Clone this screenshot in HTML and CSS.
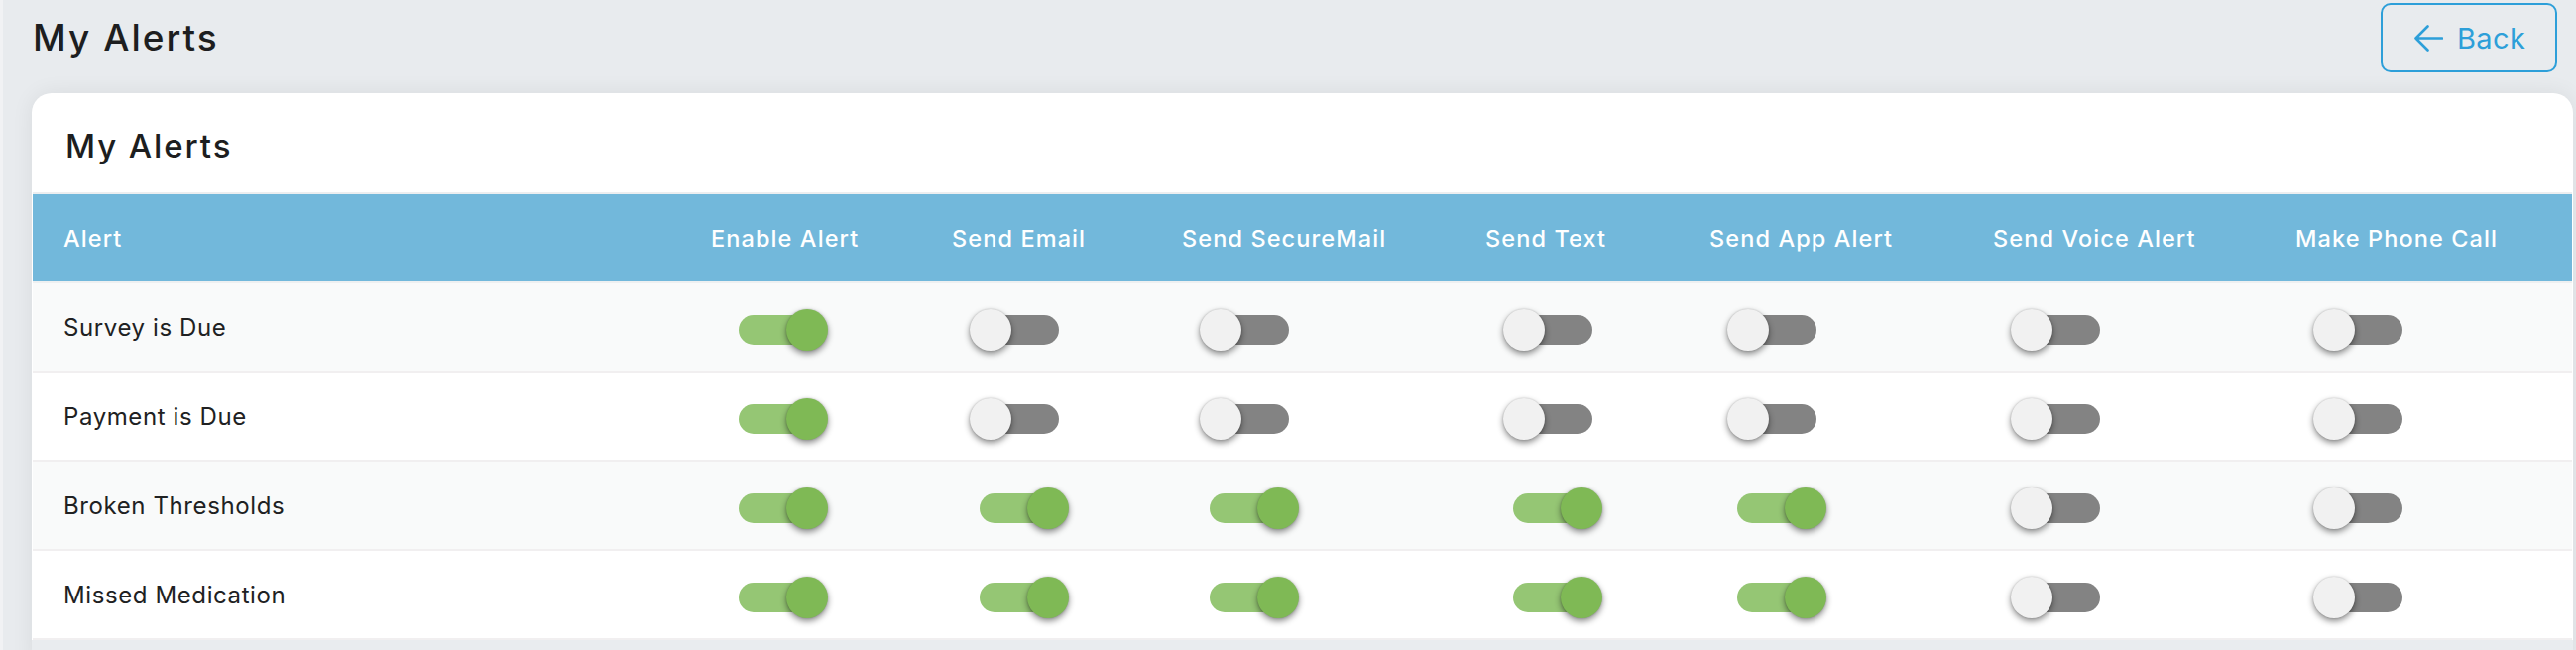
FILE: index.html
```html
<!DOCTYPE html>
<html lang="en">
<head>
<meta charset="utf-8">
<title>My Alerts</title>
<link rel="stylesheet" href="styles.css">
</head>
<body>
<div class="page">
  <header class="page-head">
    <h1 class="page-title">My Alerts</h1>
    <button class="back-btn" type="button">
      <svg class="back-icon" viewBox="0 0 30 29" width="30" height="29" aria-hidden="true">
        <path d="M29 14.5H2.5M14.5 2.5L2.5 14.5L14.5 26.5" fill="none" stroke="currentColor" stroke-width="2.6" stroke-linecap="round" stroke-linejoin="round"/>
      </svg>
      <span>Back</span>
    </button>
  </header>

  <section class="card">
    <h2 class="card-title">My Alerts</h2>
    <div class="alerts">
      <div class="row row--head">
        <div class="cell">Alert</div>
        <div class="cell">Enable Alert</div>
        <div class="cell">Send Email</div>
        <div class="cell">Send SecureMail</div>
        <div class="cell">Send Text</div>
        <div class="cell">Send App Alert</div>
        <div class="cell">Send Voice Alert</div>
        <div class="cell">Make Phone Call</div>
      </div>

      <div class="row row--odd">
        <div class="cell cell--label">Survey is Due</div>
        <div class="cell"><span class="toggle toggle--on"><span class="toggle-track"></span><span class="toggle-knob"></span></span></div>
        <div class="cell"><span class="toggle"><span class="toggle-track"></span><span class="toggle-knob"></span></span></div>
        <div class="cell"><span class="toggle"><span class="toggle-track"></span><span class="toggle-knob"></span></span></div>
        <div class="cell"><span class="toggle"><span class="toggle-track"></span><span class="toggle-knob"></span></span></div>
        <div class="cell"><span class="toggle"><span class="toggle-track"></span><span class="toggle-knob"></span></span></div>
        <div class="cell"><span class="toggle"><span class="toggle-track"></span><span class="toggle-knob"></span></span></div>
        <div class="cell"><span class="toggle"><span class="toggle-track"></span><span class="toggle-knob"></span></span></div>
      </div>

      <div class="row">
        <div class="cell cell--label">Payment is Due</div>
        <div class="cell"><span class="toggle toggle--on"><span class="toggle-track"></span><span class="toggle-knob"></span></span></div>
        <div class="cell"><span class="toggle"><span class="toggle-track"></span><span class="toggle-knob"></span></span></div>
        <div class="cell"><span class="toggle"><span class="toggle-track"></span><span class="toggle-knob"></span></span></div>
        <div class="cell"><span class="toggle"><span class="toggle-track"></span><span class="toggle-knob"></span></span></div>
        <div class="cell"><span class="toggle"><span class="toggle-track"></span><span class="toggle-knob"></span></span></div>
        <div class="cell"><span class="toggle"><span class="toggle-track"></span><span class="toggle-knob"></span></span></div>
        <div class="cell"><span class="toggle"><span class="toggle-track"></span><span class="toggle-knob"></span></span></div>
      </div>

      <div class="row row--odd">
        <div class="cell cell--label">Broken Thresholds</div>
        <div class="cell"><span class="toggle toggle--on"><span class="toggle-track"></span><span class="toggle-knob"></span></span></div>
        <div class="cell"><span class="toggle toggle--on"><span class="toggle-track"></span><span class="toggle-knob"></span></span></div>
        <div class="cell"><span class="toggle toggle--on"><span class="toggle-track"></span><span class="toggle-knob"></span></span></div>
        <div class="cell"><span class="toggle toggle--on"><span class="toggle-track"></span><span class="toggle-knob"></span></span></div>
        <div class="cell"><span class="toggle toggle--on"><span class="toggle-track"></span><span class="toggle-knob"></span></span></div>
        <div class="cell"><span class="toggle"><span class="toggle-track"></span><span class="toggle-knob"></span></span></div>
        <div class="cell"><span class="toggle"><span class="toggle-track"></span><span class="toggle-knob"></span></span></div>
      </div>

      <div class="row">
        <div class="cell cell--label">Missed Medication</div>
        <div class="cell"><span class="toggle toggle--on"><span class="toggle-track"></span><span class="toggle-knob"></span></span></div>
        <div class="cell"><span class="toggle toggle--on"><span class="toggle-track"></span><span class="toggle-knob"></span></span></div>
        <div class="cell"><span class="toggle toggle--on"><span class="toggle-track"></span><span class="toggle-knob"></span></span></div>
        <div class="cell"><span class="toggle toggle--on"><span class="toggle-track"></span><span class="toggle-knob"></span></span></div>
        <div class="cell"><span class="toggle toggle--on"><span class="toggle-track"></span><span class="toggle-knob"></span></span></div>
        <div class="cell"><span class="toggle"><span class="toggle-track"></span><span class="toggle-knob"></span></span></div>
        <div class="cell"><span class="toggle"><span class="toggle-track"></span><span class="toggle-knob"></span></span></div>
      </div>
    </div>
    <div class="card-foot"></div>
  </section>
</div>
</body>
</html>
```

FILE: styles.css
```css
* {
  box-sizing: border-box;
}

html, body {
  margin: 0;
  padding: 0;
}

body {
  background: #e8ebee;
  font-family: "Inter", "Liberation Sans", sans-serif;
  color: #202122;
}

.page {
  border-left: 3px solid #f1f2f4;
  min-height: 100vh;
  padding: 0 3px 0 29px;
}

.page-head {
  height: 76px;
  display: flex;
  align-items: center;
  justify-content: space-between;
  padding: 0 16px 0 1px;
}

.page-title {
  margin: 0;
  font-size: 37px;
  font-weight: 450;
  letter-spacing: 2px;
  color: #1d1e20;
  line-height: 1;
  padding-bottom: 2px;
}

.back-btn {
  width: 178px;
  height: 70px;
  display: flex;
  align-items: center;
  gap: 14px;
  padding: 0 0 0 31px;
  border: 2px solid #2d9fd9;
  border-radius: 10px;
  background: transparent;
  color: #2d9fd9;
  font-family: inherit;
  font-size: 29px;
  font-weight: 400;
  letter-spacing: 0.4px;
  cursor: pointer;
}

.back-icon {
  flex: none;
  display: block;
}

.card {
  margin-top: 18px;
  background: #ffffff;
  border-radius: 20px 20px 0 0;
  box-shadow: 0 0 22px rgba(0, 0, 0, 0.07);
  overflow: hidden;
}

.card-title {
  margin: 0;
  height: 100px;
  display: flex;
  align-items: center;
  padding: 6px 0 0 34px;
  font-size: 33px;
  font-weight: 450;
  letter-spacing: 1.9px;
  color: #1d1e20;
}

.alerts {
  border-top: 2px solid #eceef0;
  margin-left: 1px;
  margin-right: 1px;
}

.row {
  display: grid;
  grid-template-columns: 653px 243px 232px 306px 226px 286px 305px 1fr;
  height: 90px;
  border-bottom: 2px solid #f1eff0;
  background: #ffffff;
}

.row--odd {
  background: #f9fafa;
}

.row--head {
  background: #72b8db;
  border-bottom-color: #eef0f1;
  color: #ffffff;
  font-size: 23.5px;
  font-weight: 500;
  letter-spacing: 1.1px;
}

.cell {
  display: flex;
  align-items: center;
  padding-left: 31px;
  white-space: nowrap;
}

.cell--label {
  font-size: 24px;
  font-weight: 400;
  letter-spacing: 0.6px;
  color: #202122;
}

.toggle {
  position: relative;
  display: block;
  width: 80px;
  height: 42px;
  margin-left: 28px;
  margin-top: 6px;
}

.toggle-track {
  position: absolute;
  top: 6px;
  left: 0;
  width: 80px;
  height: 30px;
  border-radius: 15px;
  background: #838383;
}

.toggle-knob {
  position: absolute;
  top: 0;
  left: -10px;
  width: 42px;
  height: 42px;
  border-radius: 50%;
  background: #f1f1f1;
  box-shadow: 0 3px 6px rgba(0, 0, 0, 0.45), 0 0 2px rgba(0, 0, 0, 0.2);
}

.toggle--on .toggle-track {
  background: #95c674;
}

.toggle--on .toggle-knob {
  left: 48px;
  background: #7fb955;
}

.card-foot {
  height: 24px;
  background: #e9ecef;
}
```
